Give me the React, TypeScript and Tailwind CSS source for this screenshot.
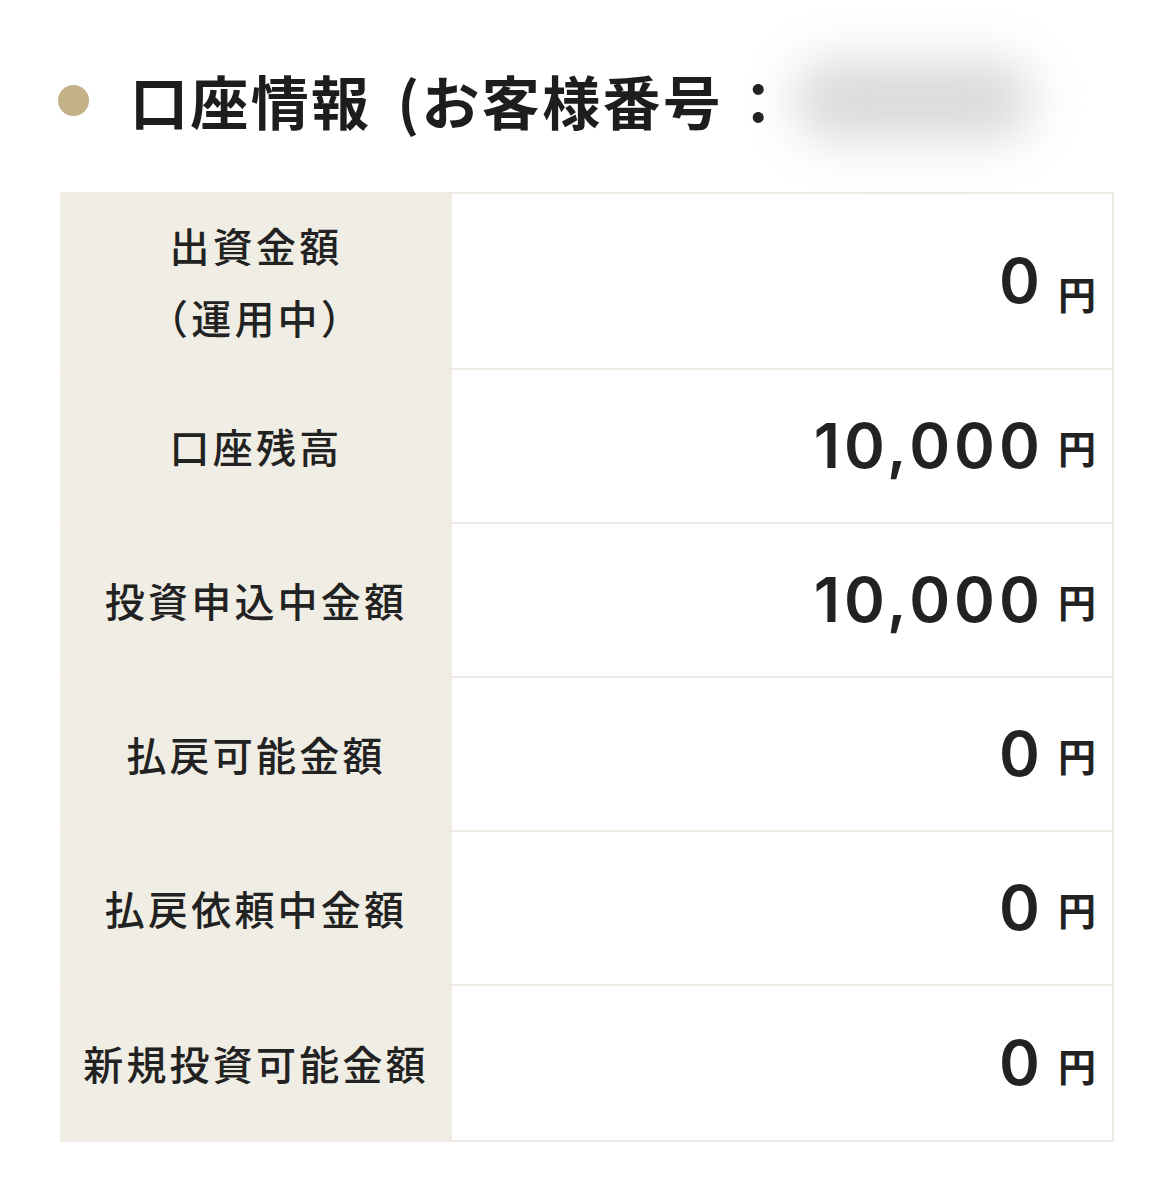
const rows = [
  { label: ["出資金額", "（運用中）"], value: "0", tall: true },
  { label: ["口座残高"], value: "10,000" },
  { label: ["投資申込中金額"], value: "10,000" },
  { label: ["払戻可能金額"], value: "0" },
  { label: ["払戻依頼中金額"], value: "0" },
  { label: ["新規投資可能金額"], value: "0" },
];

function Row({ label, value, tall }: { label: string[]; value: string; tall?: boolean }) {
  return (
    <div
      className={
        "grid grid-cols-[388px_1fr] gap-[2px] border-b-2 border-[#efebe2] last:border-b-0 " +
        (tall ? "h-[176px]" : "h-[154px]")
      }
    >
      <div className="bg-[#f0ede4] flex flex-col items-center justify-center text-[40px] leading-[1.8] tracking-[0.08em] font-medium text-[#222]">
        {label.map((l) => (
          <span key={l}>{l}</span>
        ))}
      </div>
      <div className="bg-white flex items-center justify-end pr-[16px]">
        <span className="font-['Inter',sans-serif] font-semibold text-[62px] tracking-[0.065em] text-[#222] leading-none">
          {value}
        </span>
        <span className="ml-[14px] text-[38px] font-bold text-[#222] leading-none self-end mb-[56px]">
          円
        </span>
      </div>
    </div>
  );
}

export default function App() {
  return (
    <div className="w-[1175px] h-[1200px] bg-white font-['Noto_Sans_CJK_JP',sans-serif] text-[#222] pt-[50px]">
      <div className="flex items-center h-[100px] pl-[58px]">
        <span className="w-[31px] h-[31px] rounded-full bg-[#c3b187]" />
        <h1 className="ml-[41px] flex text-[58px] font-bold leading-none tracking-[0.04em] text-[#1d1d1d]">
          <span>口座情報</span>
          <span className="ml-[26px]">(お客様番号</span>
          <span className="ml-[6px]">：</span>
        </h1>
        <div className="ml-[4px] w-[240px] h-[80px] rounded-full bg-[#dadada] blur-xl" />
      </div>
      <div className="mt-[42px] mx-[60px] w-[1054px] border-2 border-[#efebe2] bg-[#efebe2]">
        {rows.map((r, i) => (
          <Row key={i} label={r.label} value={r.value} tall={r.tall} />
        ))}
      </div>
    </div>
  );
}
